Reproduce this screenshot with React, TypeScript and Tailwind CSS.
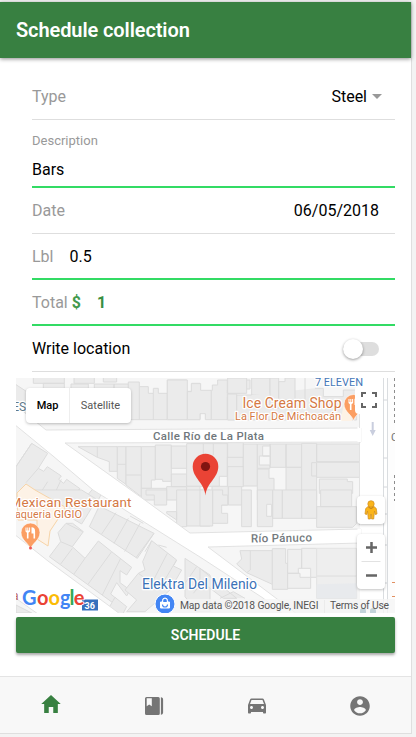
import React from "react";
import { IoMdHome, IoMdCar, IoMdContact } from "react-icons/io";

function BookIcon() {
  return (
    <svg width="20" height="20" viewBox="0 0 20 20" fill="#757575">
      <path
        fillRule="evenodd"
        d="M2.500 1h11.800a1.500 1.500 0 0 1 1.500 1.500v15a1.500 1.500 0 0 1-1.500 1.500H2.500A1.500 1.500 0 0 1 1 17.500V2.500A1.500 1.500 0 0 1 2.500 1zM2.700 2.300v7.900L5.200 8.600 7.800 10.200V2.300z"
      />
      <path d="M16.900 1.300c1.500.2 2.200.9 2.200 2.200v13c0 1.300-.7 2-2.200 2.200z" />
    </svg>
  );
}

function ForkPin({ x, y }: { x: number; y: number }) {
  return (
    <g transform={`translate(${x} ${y})`}>
      <path
        d="M0 17C-1 11-9.500 8-9.500 0a9.500 9.500 0 0 1 19 0C9.500 8 1 11 0 17z"
        fill="#fb9e63"
        stroke="#fff"
        strokeWidth="0.600"
      />
      <path
        d="M-5-5h1v3h.8v-3h1v3h.8v-3h1V-1L-2 .3V6h-1.600V.3L-5-1zM1-5.200c2.500 0 3.600 1.500 3.600 4V6H3V1H1z"
        fill="#fff"
      />
    </g>
  );
}

function MapCanvas() {
  return (
    <svg
      className="block font-[Roboto,sans-serif]"
      width="379"
      height="235"
      viewBox="16 378 379 235"
    >
      <rect x="16" y="378" width="379" height="235" fill="#f6f6f6" />

      {/* buildings, upper left */}
      <g
        transform="translate(10 370) scale(.33333)"
        fill="#ebebeb"
        stroke="#dcdcdc"
        strokeWidth="3"
      >
        <path d="M0 80L18 44 58 70V180L0 150z" />
        <path d="M70 24V40H163V24M192 24V40H253V24M100 60V40H163V60M280 24V36H320V24" />
        <path d="M183 42H235V60H183zM253 42H312V60H253zM312 42H355V60H312z" />
        <path d="M355 36H388V50H415V70H430V55H445V70H472V149H355z" />
        <path d="M388 50V149M430 70V149" />
        <path d="M472 30H530V149H472zM530 64H545V40H570V149H530z" />
        <path d="M204 230H322V304H298V275L262 262z" />
        <path d="M262 230V262" />
        <path d="M322 230H348V343L322 325z" />
        <path d="M348 230H394V380L348 345zM322 283H348M348 315H394" />
        <path d="M394 230H436V330H424V355H394zM436 225H484V334H458V328H436zM484 228H530V295H484zM484 312H530V350H484zM394 355H470V390H394zM470 350H530V390H470z" />
        <path d="M65 220L113 250 85 295 101 304 112 290 154 318 146 328 161 340 170 328 210 356 200 372 220 386 H18V290z" />
        <path d="M18 290L65 220M48 338L85 295M92 368L113 335M125 390L154 328M170 390L210 356M250 355L275 370 265 390 H220z" />
      </g>

      {/* buildings, above and around the selected place */}
      <g
        transform="translate(110 375) scale(.33333)"
        fill="#ebebeb"
        stroke="#dcdcdc"
        strokeWidth="3"
      >
        <path d="M172 15H232V134H172zM232 50H244V26H272V46H304V134H286V116H270V134H232z" />
        <path d="M304 46H307V30H323V15H352V134H304zM352 45H390V54H352zM352 66H376V134H352zM393 15H420V42H393z" />
        <path d="M230 206H352V304H328V334H230zM280 206V240M310 206V240M352 246H400V304H386V334H352zM400 212H420V304H400z" />
        <path d="M230 334H270V390H230zM270 366H306V390H270zM306 334H355V390H306zM355 334H395V390H355z" />
      </g>

      {/* buildings, upper right */}
      <g
        transform="translate(200 370) scale(.33333)"
        fill="#ebebeb"
        stroke="#dcdcdc"
        strokeWidth="3"
      >
        <path d="M83 24H140V70H83zM155 24H210V75H155z" />
        <path d="M210 24H236V115H210zM236 35H255V24H285V90H236zM315 24V115M345 55H370V80H430V60H470V150H110V75H155" />
        <path d="M83 72H110V150H83z" />
        <path d="M83 218H130V262H83zM130 222H172V348H130zM83 290H130V350H83z" />
        <path d="M172 222H210V295H172zM210 222H258V292H210zM172 297H207V325H222V390H172zM258 222H305V292H258zM258 292H305V390H275V370H258z" />
        <path d="M188 228H210V258H188zM188 258H178V285H210V258z" fill="#f5f5f5" />
        <path d="M305 220H350V365H305zM350 222H480V275H350zM335 278H350V318H335z" />
        <path d="M350 277H480V322H350zM358 327H442V335H458V370H358zM305 365H350V390H305z" />
      </g>

      {/* buildings, lower left */}
      <g
        transform="translate(10 490) scale(.33333)"
        fill="#ebebeb"
        stroke="#dcdcdc"
        strokeWidth="3"
      >
        <path d="M40 0H215L260 28 235 70 215 102 160 70z" />
        <path d="M188 100L220 125 187 170 225 205 265 153 305 185 365 232 350 255 330 242V278L360 300 350 318 320 278 302 312 318 325 308 338 118 200 152 155 144 128 168 100z" />
        <path d="M152 155L187 170M152 222L187 175M192 252L225 205M234 283L305 185M277 315L332 205M168 100L218 125" />
        <path d="M268 48L432 130 382 205 238 110z" />
        <path d="M275 132L318 68M312 160L355 85M344 185L390 100M378 203L432 130M360 78L400 100" />
        <path d="M425 152L500 210 490 228 515 240 480 300 405 365H350L380 330 345 300 385 250 405 240 398 215z" />
        <path d="M405 185L425 152M428 275L472 190M455 285L500 210M385 250L440 290M445 165L470 172" />
        <path d="M525 205V320L560 365H600V255z" />
        <path d="M525 280L560 230M550 310L590 262" />
        <path d="M408 0H470V45H433V15H408zM500 0H530V110H500zM470 65H500V90L470 70zM530 0H600V108H530z" />
        <path d="M18 345L65 369H18zM290 365L315 322 350 350 340 369" />
      </g>

      {/* buildings, lower right */}
      <g
        transform="translate(200 490) scale(.33333)"
        fill="#ebebeb"
        stroke="#dcdcdc"
        strokeWidth="3"
      >
        <path d="M0 0H38V108H0zM38 0H68V15H83V45H65V70H83V100H38zM125 0H154V110H125zM172 0H218V110H172zM218 0H247V85H218zM247 0H305V85H247zM305 0H350V85H305zM362 0H455V50H362zM350 50H470V100L458 112H350z" />
        <path d="M200 43H215V79H200z" fill="#f5f5f5" />
        <path d="M120 182H217V283L140 248 110 222 125 207z" />
        <path d="M151 182V240L140 248M217 176H257V220H263V298H217z" />
        <path d="M263 178H305V235H295V250H263zM263 250H300V262H332V295H263zM305 175H350V262H332V235H305z" fill="#efefef" />
        <path d="M350 175H470V258H350zM350 258H470V325H350z" fill="#eeeeee" stroke="#e3e3e3" />
        <path d="M350 283L470 280V325H350z" fill="#e8eaed" stroke="none" />
        <path d="M0 235L110 325H70L0 272zM60 325L100 305 135 325" />
      </g>

      {/* restaurant parcels */}
      <g fill="#fdf2e6" stroke="#f7d4a8" strokeWidth="1">
        <path d="M17 493L26 484 35 490 65 507 62 513 50 531 48 546 37 539V520H18z" />
        <path d="M343 407L352 400V421H341z" stroke="none" />
      </g>

      {/* streets */}
      <g stroke="#e2e2e2" strokeWidth="1" fill="#fff">
        <path d="M360 376H387V616H360z" stroke="none" />
        <path d="M14 404L46 430 361 428V442L65 443 142 498 190 533 361 529V543L208 547 297 614H283L263 598 200 557 93 490 53 456 14 424z" />
        <path d="M14 534L48 561 108 605 120 614H38L14 597z" />
        <path d="M359.500 427V442M359.500 528.500V543.500" stroke="#fff" strokeWidth="4" />
        <path d="M359.500 378V428M359.500 442V525" stroke="#e2e2e2" />
        <path d="M383.500 378V613M387.500 378V613" stroke="#dadde0" fill="none" />
        <path d="M388 378H395V613H388z" fill="#fdfdfd" stroke="none" />
      </g>
      <path d="M383 400h4M383 458h4M383 487h4M383 514h4M383 545h4M383 583h4" stroke="#d3d6da" />
      <path d="M394.500 378V424M394.500 475V501" stroke="#8d8d8d" strokeDasharray="3 3" />
      <text x="391" y="441" fontSize="11" fill="#747474">C</text>
      <path d="M392 582.500h3M392 596.500h3" stroke="#e29061" />
      <path d="M371.700 422h2v8h2l-3 6-3-6h2z" fill="#c9cede" />

      {/* labels */}
      <g stroke="#fff" strokeWidth="2.500" strokeLinejoin="round" paintOrder="stroke">
        <text x="9" y="411" fontSize="12" fill="#61798a">.ES</text>
        <text x="315" y="385.500" fontSize="11" fill="#4577b8" textLength="48">7 ELEVEN</text>
        <text x="242.500" y="408" fontSize="14" fill="#d57944" textLength="99">Ice Cream Shop</text>
        <text x="235" y="419.500" fontSize="11" fill="#d57944" textLength="106">La Flor De Michoacán</text>
        <text x="153" y="439.500" fontSize="11.500" fontWeight="500" fill="#6f777c" textLength="111">Calle Río de La Plata</text>
        <text x="251" y="542.500" fontSize="11.500" fontWeight="500" fill="#73797d" textLength="61" transform="rotate(-1 251 543)">Río Pánuco</text>
        <text x="9.500" y="507" fontSize="13.500" fill="#d57944" textLength="122">Mexican Restaurant</text>
        <text x="9" y="518" fontSize="11" fill="#d57944" textLength="73">Taqueria GIGIO</text>
        <text x="142" y="589" fontSize="14" fill="#3c72b8" textLength="115">Elektra Del Milenio</text>
      </g>
      <text x="12" y="600" fontSize="12" fill="#bb6463">a</text>

      <ForkPin x={30.500} y={532.500} />
      <ForkPin x={353.500} y={404} />
      <circle cx="30.500" cy="548" r="1.500" fill="#ee5959" />

      {/* selected place */}
      <path
        d="M205.500 495.500C204.500 483 192.700 478 192.700 466.500a12.800 12.800 0 0 1 25.600 0C218.300 478 206.500 483 205.500 495.500z"
        fill="#ea4335"
      />
      <circle cx="205.500" cy="466.500" r="4.600" fill="#811411" />

      {/* highway badge and shop marker */}
      <rect x="82" y="599.500" width="16" height="11" fill="#3670bd" />
      <text x="84.500" y="608.700" fontSize="9" fontWeight="700" fill="#fff" textLength="10.500">36</text>
      <circle cx="165" cy="604" r="10" fill="#4285f4" stroke="#fff" />
      <path d="M160.500 602h9v6h-9zM162.500 602v-1.500a2.500 2.500 0 0 1 5 0V602" fill="#fff" stroke="#fff" />
      <path d="M163.200 602v-1.500a1.800 1.800 0 0 1 3.600 0V602z" fill="#4285f4" />
      <path d="M162.500 604.500a2.500 2.500 0 0 0 5 0" fill="none" stroke="#4285f4" strokeWidth="1.200" />
      <g
        fontSize="20"
        fontFamily="Lato"
        fontWeight="700"
        stroke="#fff"
        strokeWidth="1.500"
        paintOrder="stroke"
      >
        <text x="22" y="605.300">
          <tspan fill="#4285f4">G</tspan>
          <tspan x="37" fill="#ea4335">o</tspan>
          <tspan x="48.500" fill="#fbbc05">o</tspan>
          <tspan x="60" fill="#4285f4">g</tspan>
          <tspan x="69.500" fill="#34a853">l</tspan>
          <tspan x="73.700" fill="#ea4335">e</tspan>
        </text>
      </g>

      {/* attribution */}
      <rect x="175" y="599" width="220" height="14" fill="#f5f5f5" opacity="0.780" />
      <path d="M360 611a3 3 0 0 1 6 0v2h-6zM370 611a3 3 0 0 1 6 0v2h-6z" fill="#c3d3da" />
      <g fontSize="10.300" fill="#555">
        <text x="180" y="609" textLength="138.500">Map data ©2018 Google, INEGI</text>
        <text x="330" y="609" textLength="59">Terms of Use</text>
      </g>
      <path d="M324.500 600V613" stroke="#ebebeb" />
    </svg>
  );
}

function Pegman() {
  return (
    <svg width="14" height="20" viewBox="0 0 14 20">
      <path
        d="M4 6.500h6l2.300 2 .7 5.500-1.800.5-.7-3.500L9.700 19H7.600L7 14l-.6 5H4.300L3.500 11l-.7 3.500L1 14l.7-5.500z"
        fill="#fbb51a"
        stroke="#cf8c22"
        strokeWidth="0.700"
      />
      <circle cx="7" cy="3.900" r="3.200" fill="#fbb51a" stroke="#cf8c22" strokeWidth="0.700" />
      <path d="M4.500 7.300 7 8.500l2.500-1.200" fill="none" stroke="#a87122" strokeWidth="0.800" />
    </svg>
  );
}

function Row({
  children,
  active = false,
}: {
  children: React.ReactNode;
  active?: boolean;
}) {
  return (
    <div
      className={`ml-4 flex h-[46px] items-center pr-4 ${
        active ? "border-b-2 border-[#32db64] pt-0.5" : "border-b border-[#dedede]"
      }`}
    >
      {children}
    </div>
  );
}

export default function App() {
  return (
    <div className="h-[737px] w-[416px] overflow-hidden bg-[#f3f3f3] pt-0.5 font-[Roboto,sans-serif] text-base leading-5 text-black">
      <div className="flex h-[732px] w-[412px] flex-col border-r border-b border-[#dfdfdf] bg-white">
        <header className="z-10 flex h-14 shrink-0 items-center bg-[#388041] px-4 text-xl font-semibold text-white shadow-[0_1px_4px_rgba(0,0,0,0.45)]">
          <h1 className="tracking-[-0.100px]">Schedule collection</h1>
        </header>

        <main className="flex-1 px-4 pt-4">
          <Row>
            <span className="text-[#999]">Type</span>
            <span className="ml-auto">Steel</span>
            <span className="-mr-[3px] ml-[5px] border-x-[5px] border-t-[5px] border-x-transparent border-t-[#999]" />
          </Row>
          <div className="ml-4 flex h-[68px] flex-col border-b-2 border-[#32db64] pt-[11px]">
            <span className="text-[13px] text-[#999]">Description</span>
            <span className="mt-[9px]">Bars</span>
          </div>
          <Row>
            <span className="text-[#999]">Date</span>
            <span className="ml-auto">06/05/2018</span>
          </Row>
          <Row active>
            <span className="text-[#999]">Lbl</span>
            <span className="ml-4">0.5</span>
          </Row>
          <Row active>
            <span className="text-[#999]">Total</span>
            <b className="ml-1 font-bold text-[#43994c]">$</b>
            <b className="ml-4 font-bold text-[#388e41]">1</b>
          </Row>
          <Row>
            <span>Write location</span>
            <span className="ml-auto flex h-3.5 w-9 items-center rounded-full bg-[#dedede]">
              <span className="size-5 rounded-full bg-white shadow-[0_1px_3px_rgba(0,0,0,0.4)]" />
            </span>
          </Row>

          <section className="relative mt-1.5 h-[235px] overflow-hidden">
            <MapCanvas />
            <div className="absolute top-2.5 left-2.5 flex h-[35px] w-[105px] items-center rounded-sm bg-white text-[11px] shadow-[0_1px_3px_rgba(0,0,0,0.25)]">
              <span className="flex h-full w-11 items-center justify-center border-r border-[#eee] font-medium">
                Map
              </span>
              <span className="flex-1 text-center text-[#565656]">Satellite</span>
            </div>
            <div className="absolute top-2 right-3 flex size-[28px] items-center justify-center rounded-sm bg-white">
              <svg width="16" height="16" viewBox="0 0 16 16">
                <path
                  d="M1 5V1h4M11 1h4v4M15 11v4h-4M5 15H1v-4"
                  fill="none"
                  stroke="#666"
                  strokeWidth="2"
                />
              </svg>
            </div>
            <div className="absolute top-[118px] right-2.5 flex h-7 w-7 items-center justify-center rounded-sm bg-white shadow-[0_1px_3px_rgba(0,0,0,0.25)]">
              <Pegman />
            </div>
            <div className="absolute top-[156px] right-2.5 flex h-[55px] w-7 flex-col items-center rounded-sm bg-white shadow-[0_1px_3px_rgba(0,0,0,0.25)]">
              <svg width="28" height="55" viewBox="0 0 28 55">
                <path d="M9 13.500h11M14.500 8v11M9 41.500h11" stroke="#666" strokeWidth="2.500" />
                <path d="M4.500 27.500h19" stroke="#e2e2e2" />
              </svg>
            </div>
          </section>

          <button className="mt-1 block h-9 w-full rounded-xs bg-[#388041] text-sm leading-[35px] font-semibold text-white shadow-[0_2px_3px_rgba(0,0,0,0.35)]">
            SCHEDULE
          </button>
        </main>

        <nav className="grid h-[57px] shrink-0 grid-cols-4 items-center justify-items-center border-t border-[#e4e4e4] bg-[#f8f8f8] pt-0.5 text-[#757575]">
          <IoMdHome className="mb-1 text-[#388041]" size={24} />
          <BookIcon />
          <IoMdCar size={24} />
          <IoMdContact size={24} />
        </nav>
      </div>
    </div>
  );
}
